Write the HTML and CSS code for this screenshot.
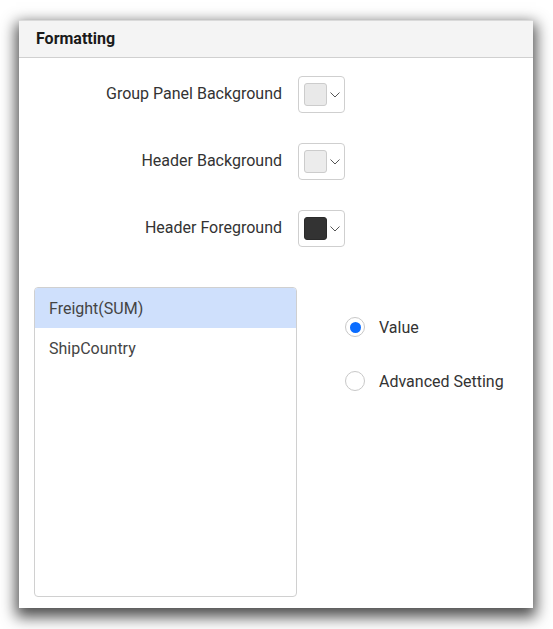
FILE: index.html
```html
<!DOCTYPE html>
<html>
<head>
<meta charset="utf-8">
<link rel="stylesheet" href="styles.css">
</head>
<body>
<div class="page">
<div class="panel">
  <div class="panel-header">Formatting</div>
  <div class="panel-body">
    <div class="rows">
      <div class="row">
        <span class="label">Group Panel Background</span>
        <div class="picker">
          <span class="swatch swatch-light"></span>
          <svg class="chev" width="10" height="6" viewBox="0 0 10 6"><path d="M0.5 0.5 L5 5 L9.5 0.5" fill="none" stroke="#555" stroke-width="1"/></svg>
        </div>
      </div>
      <div class="row">
        <span class="label">Header Background</span>
        <div class="picker">
          <span class="swatch swatch-light2"></span>
          <svg class="chev" width="10" height="6" viewBox="0 0 10 6"><path d="M0.5 0.5 L5 5 L9.5 0.5" fill="none" stroke="#555" stroke-width="1"/></svg>
        </div>
      </div>
      <div class="row">
        <span class="label">Header Foreground</span>
        <div class="picker">
          <span class="swatch swatch-dark"></span>
          <svg class="chev" width="10" height="6" viewBox="0 0 10 6"><path d="M0.5 0.5 L5 5 L9.5 0.5" fill="none" stroke="#555" stroke-width="1"/></svg>
        </div>
      </div>
    </div>
    <div class="lower">
      <ul class="list">
        <li class="item selected">Freight(SUM)</li>
        <li class="item">ShipCountry</li>
      </ul>
      <div class="radios">
        <label class="radio-row"><span class="radio checked"></span>Value</label>
        <label class="radio-row"><span class="radio"></span>Advanced Setting</label>
      </div>
    </div>
  </div>
</div>
</div>
</body>
</html>
```
FILE: styles.css
```css
html, body {
  margin: 0;
  padding: 0;
  background: #ffffff;
}
body {
  font-family: Roboto, "Liberation Sans", sans-serif;
  color: #333333;
}
.page {
  width: 553px;
  height: 629px;
  box-sizing: border-box;
  padding: 20px 0 0 19px;
  overflow: hidden;
}
.panel {
  width: 514px;
  height: 588px;
  box-sizing: border-box;
  background: #ffffff;
  box-shadow: 0 6px 14px 3px rgba(0, 0, 0, 0.7);
  display: flex;
  flex-direction: column;
}
.panel-header {
  height: 38px;
  box-sizing: border-box;
  border-top: 1px solid #dadada;
  border-bottom: 1px solid #d0d0d0;
  background: #f4f4f4;
  padding: 0 0 1px 17px;
  display: flex;
  align-items: center;
  font-size: 16px;
  font-weight: 700;
  color: #1a1a1a;
}
.panel-body {
  padding: 18px 0 0 15px;
  display: flex;
  flex-direction: column;
}
.rows {
  display: flex;
  flex-direction: column;
  gap: 30px;
}
.row {
  display: flex;
  align-items: center;
  height: 37px;
}
.label {
  width: 248px;
  text-align: right;
  font-size: 16px;
  color: #333333;
  margin-top: -3px;
}
.picker {
  margin-left: 16px;
  width: 47px;
  height: 37px;
  box-sizing: border-box;
  border: 1px solid #cfcfcf;
  border-radius: 4px;
  display: flex;
  align-items: center;
  padding-left: 5px;
  gap: 3px;
}
.swatch {
  width: 23px;
  height: 23px;
  box-sizing: border-box;
  border-radius: 3px;
  border: 1px solid #cccccc;
}
.swatch-light { background: #e9e9e9; }
.swatch-light2 { background: #ececec; }
.swatch-dark { background: #333333; border-color: #2a2a2a; }
.chev { display: block; margin-top: 1px; }
.lower {
  margin-top: 40px;
  display: flex;
}
.list {
  list-style: none;
  margin: 0;
  padding: 0;
  width: 263px;
  height: 310px;
  box-sizing: border-box;
  border: 1px solid #d0d0d0;
  border-radius: 4px;
  overflow: hidden;
}
.item {
  height: 40px;
  display: flex;
  align-items: center;
  padding-left: 14px;
  font-size: 16px;
  color: #444444;
}
.item.selected {
  background: #cfe0fc;
}
.radios {
  margin-left: 48px;
  margin-top: 30px;
  display: flex;
  flex-direction: column;
  gap: 34px;
}
.radio-row {
  display: flex;
  align-items: center;
  height: 20px;
  font-size: 16px;
  color: #333333;
}
.radio {
  width: 20px;
  height: 20px;
  box-sizing: border-box;
  border: 1px solid #c8c8c8;
  border-radius: 50%;
  margin-right: 14px;
  display: flex;
  align-items: center;
  justify-content: center;
}
.radio.checked::after {
  content: "";
  width: 11px;
  height: 11px;
  border-radius: 50%;
  background: #0a6cff;
}
```
